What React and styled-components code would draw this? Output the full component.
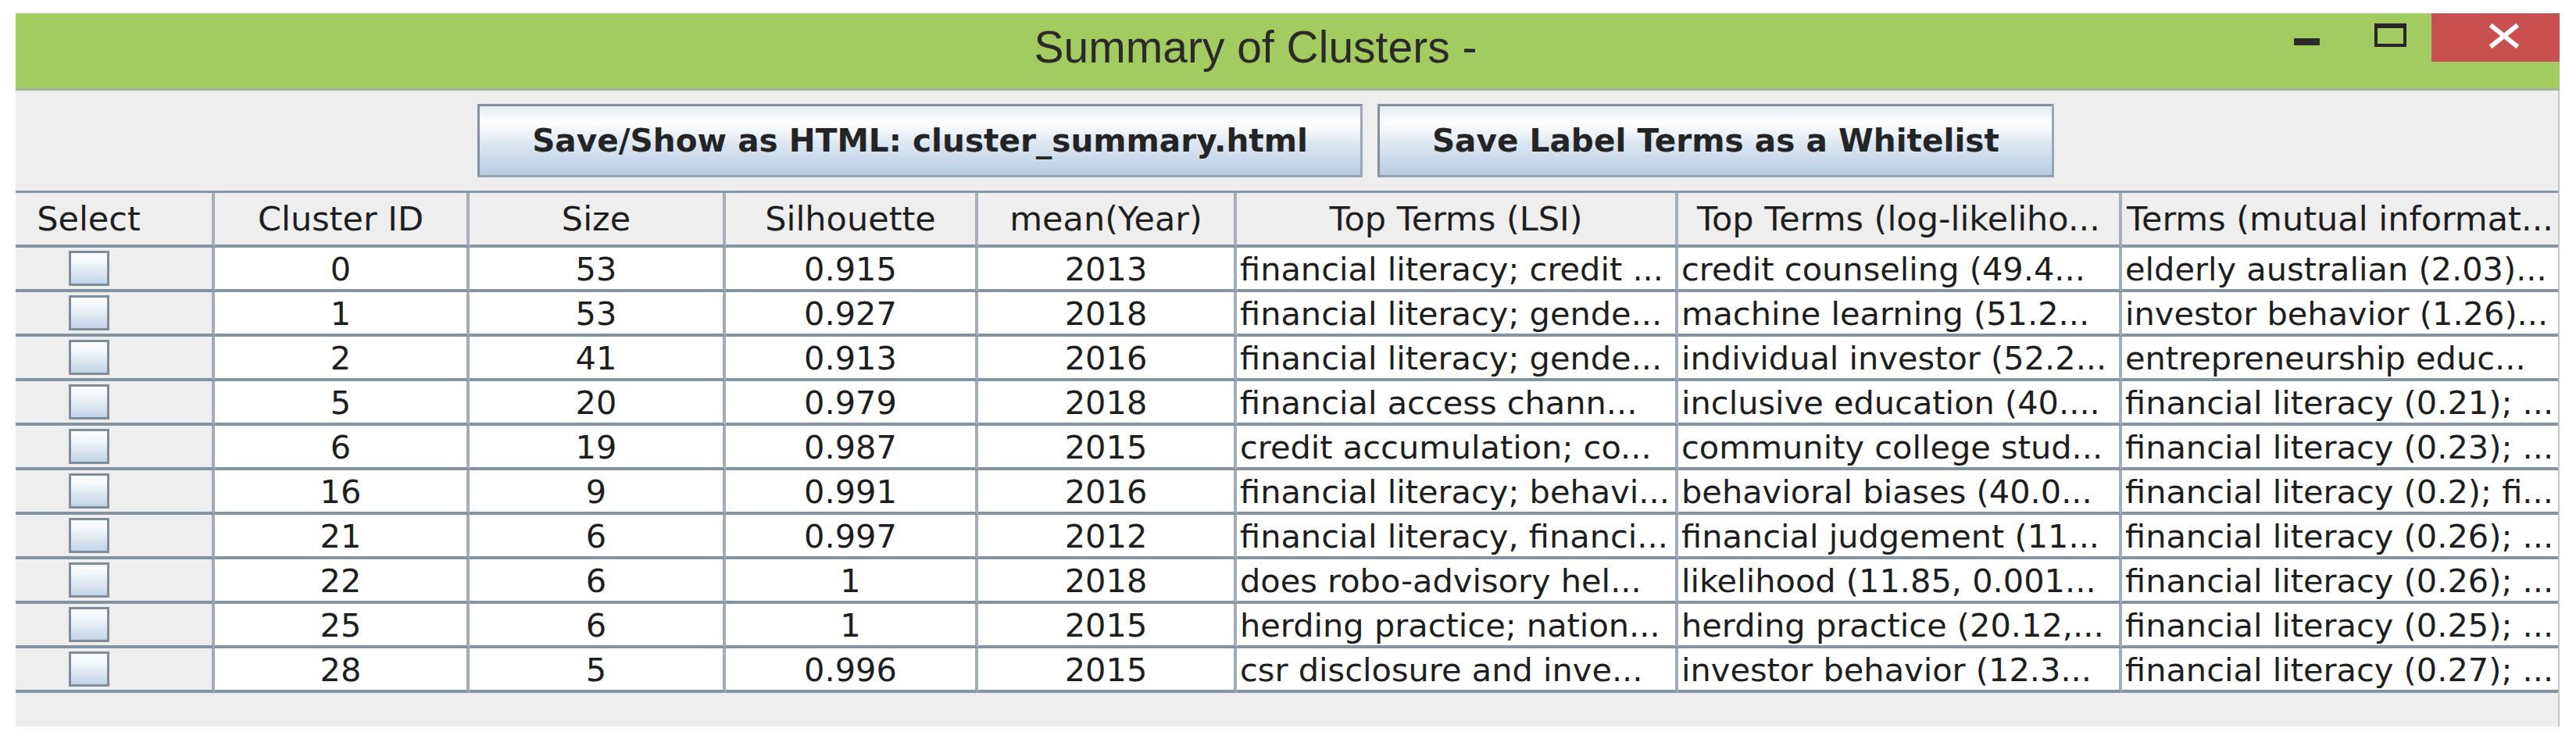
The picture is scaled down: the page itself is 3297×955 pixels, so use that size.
import React from "react";
import styled, { createGlobalStyle } from "styled-components";

const GlobalStyle = createGlobalStyle`
  html, body {
    margin: 0;
    padding: 0;
    background: #ffffff;
  }
`;

/* column widths of the cluster table, left to right */
const COLS = "255px 326px 328px 323px 331px 565px 568px 558px";

const columns = [
  { key: "select", title: "Select" },
  { key: "id", title: "Cluster ID" },
  { key: "size", title: "Size" },
  { key: "sil", title: "Silhouette" },
  { key: "year", title: "mean(Year)" },
  { key: "lsi", title: "Top Terms (LSI)" },
  { key: "llr", title: "Top Terms (log-likeliho..." },
  { key: "mi", title: "Terms (mutual informat..." },
];

const rows = [
  ["0", "53", "0.915", "2013", "financial literacy; credit ...", "credit counseling (49.4...", "elderly australian (2.03)..."],
  ["1", "53", "0.927", "2018", "financial literacy; gende...", "machine learning (51.2...", "investor behavior (1.26)..."],
  ["2", "41", "0.913", "2016", "financial literacy; gende...", "individual investor (52.2...", "entrepreneurship educ..."],
  ["5", "20", "0.979", "2018", "financial access chann...", "inclusive education (40....", "financial literacy (0.21); ..."],
  ["6", "19", "0.987", "2015", "credit accumulation; co...", "community college stud...", "financial literacy (0.23); ..."],
  ["16", "9", "0.991", "2016", "financial literacy; behavi...", "behavioral biases (40.0...", "financial literacy (0.2); fi..."],
  ["21", "6", "0.997", "2012", "financial literacy, financi...", "financial judgement (11...", "financial literacy (0.26); ..."],
  ["22", "6", "1", "2018", "does robo-advisory hel...", "likelihood (11.85, 0.001...", "financial literacy (0.26); ..."],
  ["25", "6", "1", "2015", "herding practice; nation...", "herding practice (20.12,...", "financial literacy (0.25); ..."],
  ["28", "5", "0.996", "2015", "csr disclosure and inve...", "investor behavior (12.3...", "financial literacy (0.27); ..."],
];

export default function App() {
  return (
    <>
      <GlobalStyle />
      <Window>
        <TitleBar>
          <TitleText>Summary of Clusters -</TitleText>
          <Controls>
            <ControlButton $width={105}>
              <svg width="105" height="62" viewBox="0 0 105 62">
                <rect x="36" y="32" width="33" height="9" fill="#2b2b2b" />
              </svg>
            </ControlButton>
            <ControlButton $width={107}>
              <svg width="107" height="62" viewBox="0 0 107 62">
                <rect x="36" y="16" width="37" height="25" fill="none" stroke="#262626" strokeWidth="4" />
                <rect x="34" y="13" width="41" height="6" fill="#262626" />
              </svg>
            </ControlButton>
            <ControlButton $width={164} $close>
              <svg width="164" height="62" viewBox="0 0 164 62">
                <path d="M78 17 L108 41 M108 17 L78 41" stroke="#ffffff" strokeWidth="6" strokeLinecap="square" />
              </svg>
            </ControlButton>
          </Controls>
        </TitleBar>

        <Content>
          <Toolbar>
            <ActionButton>Save/Show as HTML: cluster_summary.html</ActionButton>
            <ActionButton>Save Label Terms as a Whitelist</ActionButton>
          </Toolbar>

          <Table>
            <Row>
              {columns.map((c, i) => (
                <HeaderCell key={c.key} $first={i === 0} $last={i === columns.length - 1}>
                  {c.title}
                </HeaderCell>
              ))}
            </Row>

            {rows.map((r) => (
              <Row key={r[0]}>
                <SelectCell>
                  <Checkbox />
                </SelectCell>
                <Cell>{r[0]}</Cell>
                <Cell>{r[1]}</Cell>
                <Cell>{r[2]}</Cell>
                <Cell>{r[3]}</Cell>
                <Cell $text>{r[4]}</Cell>
                <Cell $text>{r[5]}</Cell>
                <Cell $text $last>{r[6]}</Cell>
              </Row>
            ))}
          </Table>

          <Footer />
        </Content>
      </Window>
    </>
  );
}

const Window = styled.div`
  margin: 17px 0 0 20px;
  width: 3256px;
`;

const TitleBar = styled.div`
  display: flex;
  align-items: flex-start;
  height: 95px;
  background: #a2cc5f;
  border-bottom: 4px solid #a3b889;
`;

const TitleText = styled.div`
  flex: 1;
  padding: 10px 0 0 294px;
  text-align: center;
  font-family: "Liberation Sans", Arial, sans-serif;
  font-size: 57px;
  line-height: 66px;
  color: #2a2a2a;
`;

const Controls = styled.div`
  display: flex;
  height: 62px;
`;

const ControlButton = styled.div`
  width: ${(p) => p.$width}px;
  height: 62px;
  background: ${(p) => (p.$close ? "#c9504f" : "transparent")};

  svg {
    display: block;
  }
`;

const Content = styled.div`
  background: #eeeeee;
  border-right: 2px solid #c6c6c6;
`;

const Toolbar = styled.div`
  display: flex;
  justify-content: center;
  gap: 19px;
  padding: 17px 54px 17px 0;
`;

const ActionButton = styled.button`
  height: 94px;
  padding: 0 67px;
  border: 3px solid #8290a0;
  border-right-color: #9aa6b2;
  border-bottom-color: #95a1ad;
  background: linear-gradient(
    to bottom,
    #e2e9f2 0%,
    #ffffff 24%,
    #dce7f2 55%,
    #b7cce2 100%
  );
  font-family: "DejaVu Sans", Verdana, sans-serif;
  font-weight: bold;
  font-size: 40.6px;
  color: #242424;
  white-space: nowrap;
`;

const Table = styled.div`
  border-top: 3px solid #8a96a2;
`;

const Row = styled.div`
  display: grid;
  grid-template-columns: ${COLS};
`;

const HeaderCell = styled.div`
  height: 66px;
  padding-right: ${(p) => (p.$first ? "64px" : "0")};
  background: #eeeeee;
  border-bottom: 4px solid #8794a1;
  border-right: ${(p) => (p.$last ? "none" : "4px solid #a7b0b9")};
  font-family: "DejaVu Sans", Verdana, sans-serif;
  font-size: 43px;
  line-height: 66px;
  color: #1e1e1e;
  text-align: center;
  white-space: nowrap;
  overflow: hidden;
`;

const Cell = styled.div`
  height: 53px;
  padding-left: ${(p) => (p.$text ? "4px" : "0")};
  background: #ffffff;
  border-bottom: 4px solid #8593a0;
  border-right: ${(p) => (p.$last ? "none" : "4px solid #a3adb7")};
  font-family: "DejaVu Sans", Verdana, sans-serif;
  font-size: 41.5px;
  line-height: 55px;
  color: #1e1e1e;
  text-align: ${(p) => (p.$text ? "left" : "center")};
  white-space: nowrap;
  overflow: hidden;
`;

const SelectCell = styled.div`
  display: flex;
  align-items: center;
  justify-content: center;
  height: 53px;
  padding-right: 64px;
  background: #eeeeee;
  border-bottom: 4px solid #8593a0;
  border-right: 4px solid #a3adb7;
`;

const Checkbox = styled.div`
  box-sizing: border-box;
  width: 52px;
  height: 45px;
  border: 3px solid #7f8c99;
  background: linear-gradient(to bottom, #fcfdfe 0%, #f2f6fa 30%, #c2d4e7 100%);
`;

const Footer = styled.div`
  height: 43px;
`;
